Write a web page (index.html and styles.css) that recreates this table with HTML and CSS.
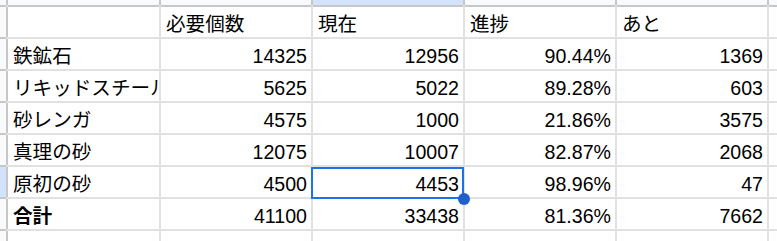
FILE: index.html
```html
<!DOCTYPE html>
<html lang="ja">
<head>
<meta charset="utf-8">
<link rel="stylesheet" href="styles.css">
</head>
<body>
<div class="sheet">
  <div class="corner"></div>
  <div class="colhead"></div>
  <div class="colhead"></div>
  <div class="colhead sel"></div>
  <div class="colhead"></div>
  <div class="colhead"></div>
  <div class="colhead rest"></div>

  <div class="rowhead"></div>
  <div class="cell"></div>
  <div class="cell">必要個数</div>
  <div class="cell">現在</div>
  <div class="cell">進捗</div>
  <div class="cell">あと</div>
  <div class="cell rest"></div>

  <div class="rowhead"></div>
  <div class="cell">鉄鉱石</div>
  <div class="cell num">14325</div>
  <div class="cell num">12956</div>
  <div class="cell num">90.44%</div>
  <div class="cell num">1369</div>
  <div class="cell rest"></div>

  <div class="rowhead"></div>
  <div class="cell">リキッドスチール</div>
  <div class="cell num">5625</div>
  <div class="cell num">5022</div>
  <div class="cell num">89.28%</div>
  <div class="cell num">603</div>
  <div class="cell rest"></div>

  <div class="rowhead"></div>
  <div class="cell">砂レンガ</div>
  <div class="cell num">4575</div>
  <div class="cell num">1000</div>
  <div class="cell num">21.86%</div>
  <div class="cell num">3575</div>
  <div class="cell rest"></div>

  <div class="rowhead"></div>
  <div class="cell">真理の砂</div>
  <div class="cell num">12075</div>
  <div class="cell num">10007</div>
  <div class="cell num">82.87%</div>
  <div class="cell num">2068</div>
  <div class="cell rest"></div>

  <div class="rowhead sel"></div>
  <div class="cell">原初の砂</div>
  <div class="cell num">4500</div>
  <div class="cell num active">4453</div>
  <div class="cell num">98.96%</div>
  <div class="cell num">47</div>
  <div class="cell rest"></div>

  <div class="rowhead"></div>
  <div class="cell bold">合計</div>
  <div class="cell num">41100</div>
  <div class="cell num">33438</div>
  <div class="cell num">81.36%</div>
  <div class="cell num">7662</div>
  <div class="cell rest"></div>

  <div class="rowhead"></div>
  <div class="cell"></div>
  <div class="cell"></div>
  <div class="cell"></div>
  <div class="cell"></div>
  <div class="cell"></div>
  <div class="cell rest"></div>
</div>
</body>
</html>
```
FILE: styles.css
```css
html, body {
  margin: 0;
  padding: 0;
  background: #ffffff;
  overflow: hidden;
}

.sheet {
  display: grid;
  grid-template-columns: 6px 151px 150px 150px 150px 150px 1fr;
  grid-template-rows: 5px repeat(6, 30px) 30px;
  gap: 2px;
  background: #e1e1e1;
  width: 777px;
  height: 241px;
  overflow: hidden;
  font-family: "Liberation Sans", Arial, "Noto Sans CJK JP", sans-serif;
  font-size: 19.6px;
  color: #000000;
}

.corner,
.colhead,
.rowhead {
  background: #f9fafb;
}

.colhead {
  box-shadow: 0 2px 0 #c7c7c7, -2px 0 0 #c7c7c7;
}

.corner {
  box-shadow: 0 2px 0 #c7c7c7, 2px 0 0 #c7c7c7;
}

.rowhead {
  box-shadow: 2px 0 0 #c7c7c7, 0 2px 0 #c7c7c7;
}

.colhead.sel,
.rowhead.sel {
  background: #d3e3fd;
}

.cell {
  background: #ffffff;
  display: flex;
  align-items: flex-end;
  padding: 0 5px 2px 5px;
  line-height: 22px;
  white-space: nowrap;
  overflow: hidden;
  min-width: 0;
}

.cell.num {
  justify-content: flex-end;
  padding-right: 4px;
}

.cell.bold {
  font-weight: bold;
}

.cell.rest {
  padding: 0;
}

.cell.active {
  position: relative;
  overflow: visible;
}

.cell.active::after {
  content: "";
  position: absolute;
  left: -2px;
  right: -1px;
  top: 0;
  bottom: -2px;
  border: 2px solid #1a73e8;
  pointer-events: none;
}

.cell.active::before {
  content: "";
  position: absolute;
  width: 12px;
  height: 12px;
  border-radius: 50%;
  background: #1f5fcf;
  right: -7px;
  bottom: -8px;
  z-index: 2;
}
```
